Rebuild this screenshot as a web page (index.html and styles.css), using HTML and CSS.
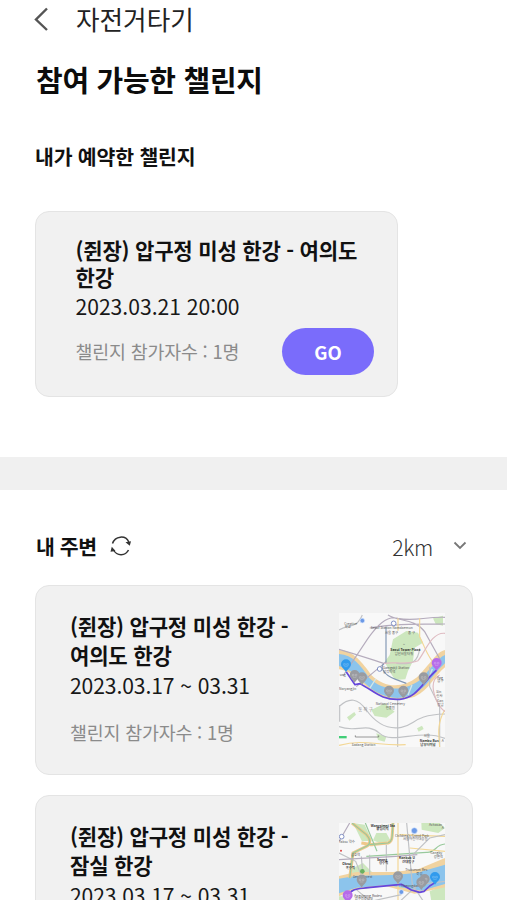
FILE: index.html
```html
<!DOCTYPE html>
<html lang="ko">
<head>
<meta charset="utf-8">
<title>자전거타기</title>
<link rel="stylesheet" href="styles.css">
</head>
<body>
<header class="topbar">
  <svg class="back" viewBox="0 0 16 24" width="16" height="24"><path d="M13 1.5 2 12.500 13 23"/></svg>
  <span>자전거타기</span>
</header>
<section class="reserved">
  <h1>참여 가능한 챌린지</h1>
  <h2>내가 예약한 챌린지</h2>
  <article class="card booked">
    <h3>(쥔장) 압구정 미성 한강 - 여의도<br>한강</h3>
    <p class="date">2023.03.21 20:00</p>
    <div class="action"><p class="count">챌린지 참가자수 : 1명</p><button class="go">GO</button></div>
  </article>
</section>
<div class="divider"></div>
<section class="nearby">
  <div class="filter">
    <h2>내 주변</h2>
    <svg class="refresh" viewBox="0 0 22 20" width="22" height="20"><path class="arc" d="M2.500 7.500C5-.2 15.500-1.200 18.800 6M3.500 14C7 20.500 15.500 20 18.500 14"/><path class="tip" d="m15.500 6.200 5.500-1-1.200 4.500zM1.800 10.700 5.500 15l-5 .8z"/></svg>
    <span class="distance">2km</span>
    <svg class="chevron" viewBox="0 0 14 10" width="14" height="10"><path d="m1.500 1.500 5.500 5.500 5.500-5.500"/></svg>
  </div>
  <article class="card near">
    <div class="info">
      <h3>(쥔장) 압구정 미성 한강 -<br>여의도 한강</h3>
      <p class="date">2023.03.17 ~ 03.31</p>
      <p class="count">챌린지 참가자수 : 1명</p>
    </div>
    <svg class="map" viewBox="28 39 318 402" width="106" height="134">
      <defs>
        <g id="pin"><path d="M0 18C-5 10-15 4-15-5A15 15 0 0 1 15-5C15 4 5 10 0 18Z"/><path class="face" d="M-7-7h5v5h-5zM2-7h5v5H2zM-5 2H5"/></g>
      </defs>
      <path class="land" d="M28 39h318v402H28z"/>
      <path class="park" d="m190 118 40-25 35 5 15 30-25 15-5 40-15 30-8 25-30 2-17-25-15-30 15-20zM125 330l40-20 30 25-25 18-35-5zM52 352l22-16 5 8-20 18zM140 400l30 10-5 15-20-5zM310 55l30-8v30l-22-5zM262 385l15-8 5 10-15 8z"/>
      <path class="sand" d="M28 150C70 150 100 190 125 225 165 265 220 265 262 232 300 195 320 155 346 150V202C315 225 300 270 255 290 215 304 170 297 135 278 95 253 75 215 28 208Z"/>
      <path class="water" d="M28 162C70 165 92 195 118 233 160 275 222 274 268 242 302 210 322 175 346 165V190C310 220 295 260 255 280 215 302 175 295 140 276 98 250 82 215 28 198Z"/>
      <path class="bridge" d="m120 265 18-28M235 285l12-30M296 235l12-28"/>
      <path class="rail" d="M40 228 115 115C140 80 170 45 205 55C255 65 285 50 346 52M162 190C100 170 70 160 28 148M175 45c30 20 80 10 110 50l50 90M80 260l90-75M120 84c80-15 150-10 226-12"/>
      <path class="road" d="M28 320C60 290 85 295 110 330S170 390 215 382 250 345 346 342M28 380C80 400 110 365 150 400S270 385 346 415M204 296V441M30 315v50M28 90c30-20 50 0 70-45M200 190c50 5 65-5 70-45M300 200v60l30 60v120"/>
      <path class="gold" d="M28 436c80-20 110 2 200-2M270 55v55c20 40 20 55 50 90M345 330c-20 35-20 65-15 111M205 55V92"/>
      <path class="blueroad" d="M169 80V188C145 195 160 225 198 238L230 250"/>
      <path class="pinkroad" d="M346 100C305 95 285 160 265 182 235 195 190 185 162 190M330 225c-40 20-10 90 16 110"/>
      <path class="route" d="m50 216 26 38 15-3C130 270 155 302 210 298 265 292 275 250 321 210"/>
      <circle class="poi" cx="98" cy="62" r="7"/><circle class="station" cx="192" cy="70" r="7"/><circle class="station" cx="150" cy="207" r="7"/>
      <g class="labels">
        <text x="44" y="74">Creative</text><text x="45" y="84">학교</text>
        <text x="123" y="88">Seoul Station Namdaemun</text><text x="166" y="101">서울 중구</text><text x="235" y="101">중 구</text>
        <text class="strong" x="182" y="153">Seoul Tower Plaza</text><text x="195" y="164">남산서울타워</text><text x="220" y="135">⌂</text>
        <text x="160" y="206">Samgakji Station</text><text x="160" y="218">삼각지역</text>
        <text x="30" y="227">ung</text><text x="28" y="270">Noryangjin</text><text x="138" y="316">National Cemetery</text><text x="168" y="327">현충원</text>
        <text class="area" x="86" y="332">동 작 구</text><text x="322" y="236">Apg</text><text x="323" y="247">압구</text><text x="320" y="278">Sin</text><text x="320" y="290">신사</text><text x="322" y="306">Gan</text><text x="323" y="317">강남</text>
        <text x="282" y="410">서울</text><text class="strong" x="270" y="425">Nambu Bus</text><text class="strong" x="272" y="437">남부터미널</text><text x="66" y="437">Sadang Station</text><text x="336" y="425">A</text>
      </g>
      <path class="scale" d="M77 406v5h70v-5"/><path class="brand" d="M28 408h23v7H28z"/>
      <g class="pins"><use href="#pin" x="75" y="230"/><use href="#pin" x="97" y="237"/><use href="#pin" x="178" y="277"/><use href="#pin" x="221" y="277"/><use href="#pin" x="282" y="237"/><use class="start" href="#pin" x="49" y="198"/><use class="finish" href="#pin" x="321" y="194"/></g>
    </svg>
  </article>
  <article class="card near">
    <div class="info">
      <h3>(쥔장) 압구정 미성 한강 -<br>잠실 한강</h3>
      <p class="date">2023.03.17 ~ 03.31</p>
      <p class="count">챌린지 참가자수 : 1명</p>
    </div>
    <svg class="map" viewBox="28 125 318 402" width="106" height="134">
      <path class="land" d="M28 125h318v402H28z"/>
      <path class="park" d="m70 125 35 5 22 48-30 2zM140 155h30l12 22-24 12-28-12zM275 125h55l16 15-20 15-50-10zM60 265l40-20 30 30-70 8zM300 330l46-20v60l-40-5zM28 345h20v30H28z"/>
      <path class="sand" d="M28 284 80 272 190 272 265 264 346 230V318L255 337 170 315 75 325 28 345Z"/>
      <path class="water" d="M28 292 80 283 190 281 260 275 346 250V308L275 328 170 311 80 319 28 336Z"/>
      <path class="gold thick" d="M67 125 110 160c15 15 12 30 0 35L70 215 60 290M120 190l55-5c15-5 12-20 15-60M95 185l35 5"/>
      <path class="greenroad" d="M67 125 110 160c15 15 12 30 0 35L70 215 60 290M120 190l55-5c15-5 12-20 15-60M346 188C315 190 320 215 290 213L110 225M107 125l35 85"/>
      <path class="gold" d="M205 125V360M240 200l106 10M210 160l136 5"/>
      <path class="road" d="m231 125 17 185 40 60M28 215l50 25 20 50M95 225l5 60M120 220v60M170 190v80M250 220l50-50 46-10M200 370l65-60 81-10M100 365l115-25M80 325l60 50"/>
      <path class="rail" d="m60 125-32 55M28 235l170-10 65-5"/>
      <path class="route" d="M54 345C65 320 85 323 115 319L215 309 245 326 270 333 283 330 300 314 316 304"/>
      <circle class="station" cx="36" cy="166" r="7"/><circle class="poi" cx="254" cy="148" r="9"/><circle class="greenpoi" cx="98" cy="270" r="7"/><circle class="poi" cx="215" cy="332" r="7"/><circle class="redpoi" cx="34" cy="208" r="3"/>
      <g class="labels"><text class="strong" x="123" y="136">Wangsimni Sta</text><text class="strong" x="140" y="147">왕십리역</text><text x="196" y="166">Children's Grand Park</text><text x="220" y="177">서울어린이대공원</text><text x="28" y="184">Yaksu 약수</text><text x="64" y="223">금호역</text><text class="strong" x="38" y="252">Oksu</text><text class="strong" x="48" y="264">옥수역</text><text class="strong" x="142" y="238">Seong</text><text class="strong" x="148" y="249">성수역</text><text class="strong" x="208" y="233">Konkuk U</text><text class="strong" x="217" y="244">건대입구</text><text x="227" y="269">Ttukseom Res</text><text x="260" y="280">뚝섬</text><text x="302" y="218">Gangby</text><text x="312" y="230">강변역</text><text x="70" y="289">Seoul Forest</text><text x="74" y="346">Apgujeong Rodeo</text><text x="75" y="357">압구정로데오</text><text x="215" y="318">Cheongdam</text><text x="298" y="134">Achasan</text><text x="336" y="142">A</text></g>
      <g class="pins"><use href="#pin" x="96" y="300"/><use href="#pin" x="205" y="290"/><use href="#pin" x="285" y="298"/><use href="#pin" x="275" y="308"/><use class="start" href="#pin" x="316" y="292"/><use class="finish" href="#pin" x="54" y="347"/></g>
    </svg>
  </article>
</section>
</body>
</html>
```
FILE: styles.css
```css
* { box-sizing: border-box; }
html { overflow: hidden; }
body { margin: 0; height: 900px; overflow: hidden; background: #fff; color: #111; font-family: "Noto Sans CJK KR", sans-serif; }
h1, h2, h3, p { margin: 0; white-space: nowrap; }
svg { flex: none; }
.topbar { display: flex; align-items: center; height: 38px; padding-left: 34px; gap: 26px; font-size: 25.6px; line-height: 38px; color: #222; }
.back, .chevron { fill: none; stroke: #555; stroke-width: 2.4; }
.reserved { height: 419px; padding: 20px 36px 0 35px; }
h1 { font-size: 29px; line-height: 42px; height: 82px; padding-left: 1px; letter-spacing: -.3px; color: #0c0c0c; }
h2 { font-size: 20.5px; line-height: 32px; letter-spacing: -.2px; color: #111; }
.card { background: #f1f1f1; border: 1.5px solid #e4e4e4; border-radius: 14px; }
h3 { font-size: 21.1px; font-weight: 700; letter-spacing: -.23px; }
.date { font-size: 21.1px; line-height: 30px; color: #181818; }
.count { font-size: 18.4px; line-height: 28px; letter-spacing: -.18px; color: #8b8b8b; }
.booked { width: 363px; height: 186px; margin-top: 39px; padding: 25px 23px 0 39.5px; }
.booked h3 { line-height: 27px; }
.action { display: flex; justify-content: space-between; align-items: center; margin-top: 7px; }
.action .count { margin-top: -2px; }
.go { width: 92px; height: 47px; padding: 0; border: 0; border-radius: 24px; background: #7a6cfb; color: #fff; font: 700 18.5px "Noto Sans CJK KR", sans-serif; }
.divider { height: 33px; background: #f0f0f0; }
.nearby { padding: 39px 34px 0 35px; }
.filter { display: flex; align-items: center; height: 34px; margin-bottom: 22px; padding-left: 1px; }
.filter h2 { letter-spacing: -.4px; }
.refresh { margin-left: 13px; margin-top: -1px; }
.arc { fill: none; stroke: #333; stroke-width: 1.5; }
.tip { fill: #333; }
.distance { margin-left: auto; font-size: 21.3px; font-weight: 300; letter-spacing: -.3px; color: #333; }
.chevron { margin: 0 6px 0 20px; stroke: #777; stroke-width: 1.8; }
.near { display: flex; justify-content: space-between; height: 190px; margin-bottom: 19.500px; padding: 26px 27px 0 34px; }
.near h3 { line-height: 29px; }
.near .count { margin-top: 18px; }
.near .date { line-height: 30px; letter-spacing: -.1px; }
.map { display: block; margin-top: 1px; }
.land { fill: #f8f8f8; }
.park { fill: #cde7be; }
.sand { fill: #f1d3a0; }
.water { fill: #8cc4ec; }
.bridge { fill: none; stroke: #d2e7e9; stroke-width: 4; }
.rail, .road, .gold, .blueroad, .pinkroad, .greenroad, .route, .scale { fill: none; stroke-width: 3.5; }
.rail { stroke: #b5acbd; }
.road { stroke: #c0c2c5; }
.gold { stroke: #f3d795; }
.thick { stroke: #efc78a; stroke-width: 9; }
.blueroad { stroke: #8398b5; }
.pinkroad { stroke: #dfbcc2; }
.greenroad { stroke: #98c99c; }
.route { stroke: #6546dc; stroke-width: 5; stroke-linejoin: round; }
.poi { fill: #6b99e6; stroke: #d7e6ff; stroke-width: 2; }
.station { fill: #fff; stroke: #8291c5; stroke-width: 3; }
.greenpoi { fill: #69b05f; }
.redpoi { fill: #d44; }
.labels { font-size: 10px; fill: #555; }
.strong { font-weight: 700; fill: #333; }
.area { font-size: 13px; fill: #888; }
.scale { stroke: #666; stroke-width: 2; }
.brand { fill: #42ce78; }
.pins { fill: #999ba0; }
.start { fill: #319bed; }
.finish { fill: #b66be9; }
.face { fill: none; stroke: #fff; stroke-opacity: .4; stroke-width: 1.5; }
```
